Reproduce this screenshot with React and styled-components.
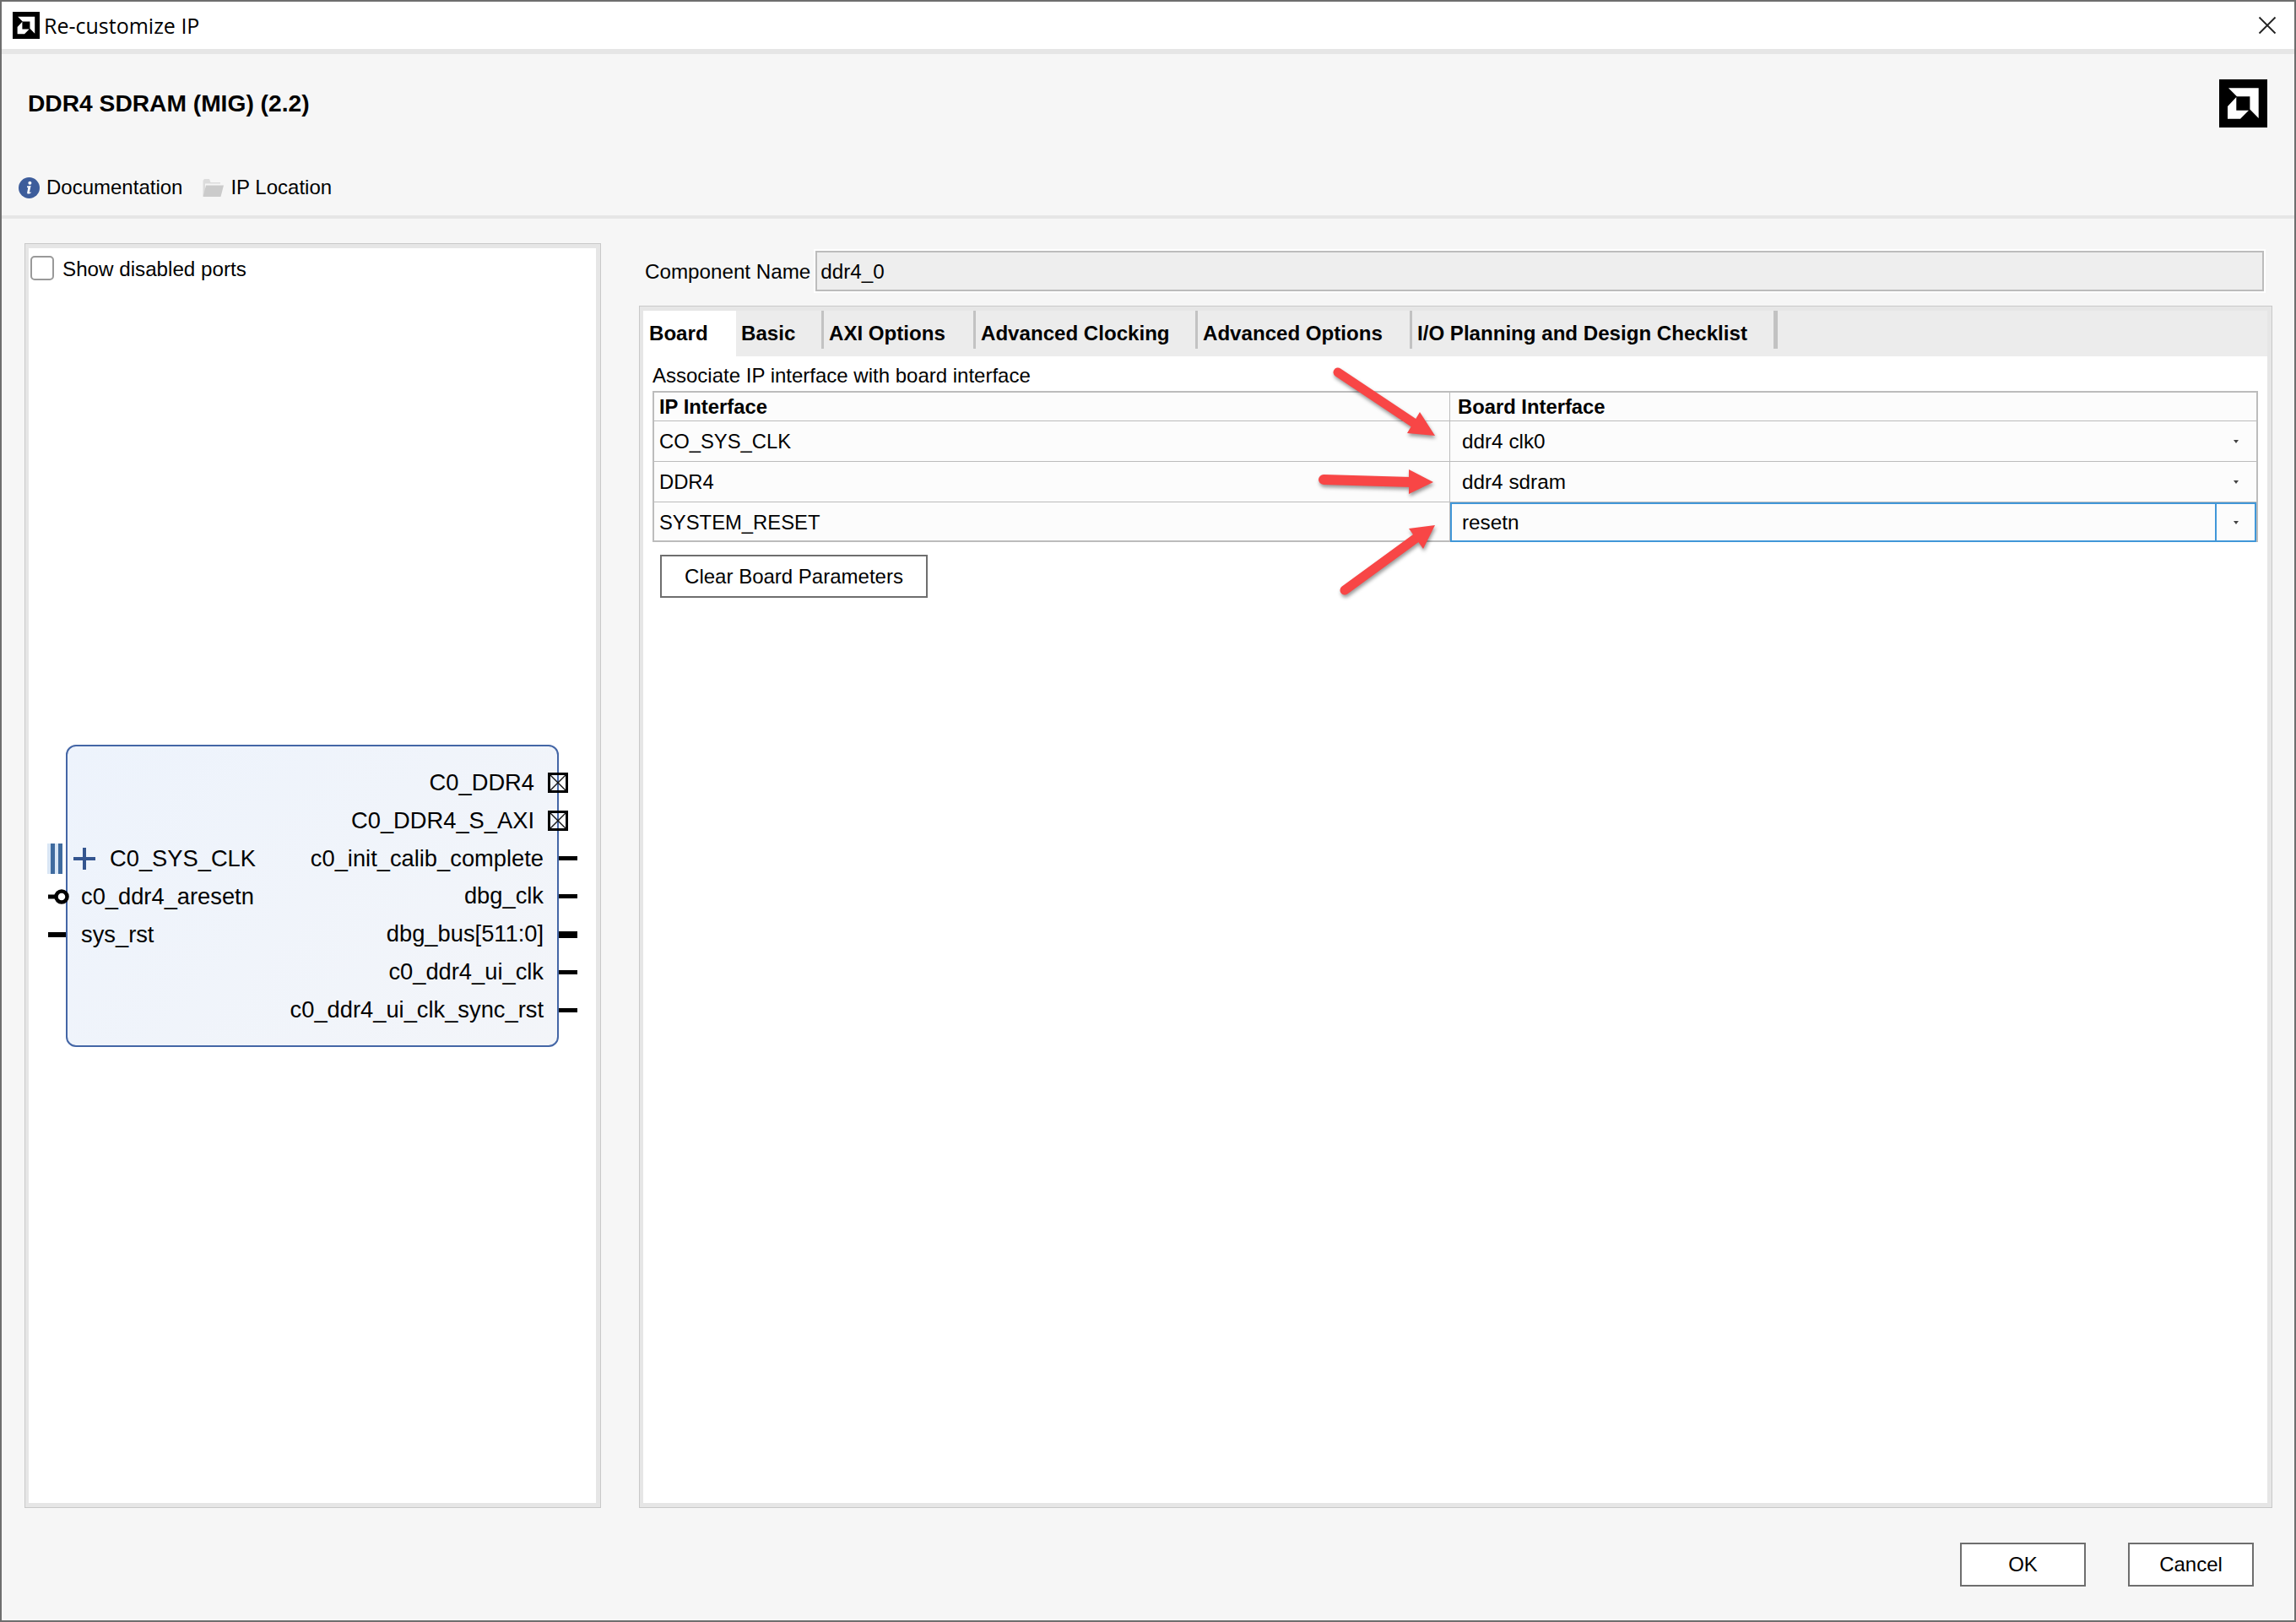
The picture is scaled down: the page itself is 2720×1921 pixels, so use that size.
import React from 'react';
import styled, { createGlobalStyle } from 'styled-components';

const Global = createGlobalStyle`
  * { box-sizing: border-box; }
  html, body { margin: 0; padding: 0; background: #fff; }
  body { font-family: "Liberation Sans", Arial, sans-serif; color: #000; }
`;

const Window = styled.div`
  position: relative;
  width: 2720px;
  height: 1921px;
  border: 2px solid #6e6e6e;
  background: #f6f6f6;
  display: flex;
  flex-direction: column;
  font-size: 24.2px;
`;
const TitleBar = styled.div`
  height: 62px;
  flex: none;
  background: #fff;
  border-bottom: 6px solid #e6e6e6;
  display: flex;
  align-items: center;
  padding: 0 21px 0 13px;
`;
const TitleText = styled.span`
  margin-left: 5px;
  font-family: "Open Sans", sans-serif;
  font-size: 25px;
  flex: 1;
`;
const Header = styled.div`
  height: 195px;
  flex: none;
  border-bottom: 4px solid #e6e6e6;
  display: flex;
  flex-direction: column;
`;
const HeadingRow = styled.div`
  height: 116px;
  padding: 0 32px 0 31px;
  display: flex;
  align-items: center;
  justify-content: space-between;
`;
const Heading = styled.h1`
  margin: 0;
  font-size: 28.2px;
  font-weight: bold;
`;
const LinkRow = styled.div`
  display: flex;
  align-items: center;
  height: 36px;
  margin-top: 24px;
  padding-left: 20px;
  font-size: 24px;
`;
const Link = styled.div`
  display: flex;
  align-items: center;
  gap: 8px;
  margin-right: 24px;
`;
const Body = styled.div`
  flex: 1;
  display: flex;
  gap: 45px;
  padding: 29px 26px 0 27px;
  min-height: 0;
`;
const Frame = styled.div`
  border: 1px solid #c9c9c9;
  background: #e6e6e6;
  padding: 5px 5px 5px 4px;
  display: flex;
  flex-direction: column;
`;
const LeftFrame = styled(Frame)`
  width: 683px;
  flex: none;
`;
const LeftInner = styled.div`
  flex: 1;
  background: #fff;
  padding: 9px 0 0 2px;
`;
const CheckRow = styled.label`
  display: flex;
  align-items: center;
  gap: 10px;
  height: 29px;
`;
const CheckBox = styled.span`
  width: 28px;
  height: 29px;
  background: #fff;
  border: 2.5px solid #999;
  border-radius: 5px;
`;
const LabelText = styled.span`
  padding-top: 2px;
`;
const Block = styled.div`
  width: 584px;
  height: 358px;
  margin: 550px 0 0 42px;
  border: 2px solid #4466a6;
  border-radius: 12px;
  background: linear-gradient(135deg, #edf3fc, #f3f5f9);
  padding-top: 21px;
  display: flex;
  justify-content: space-between;
  font-size: 27.3px;
`;
const PortColumn = styled.div`
  display: flex;
  flex-direction: column;
  flex: 1;
  padding-top: ${p => p.$offset || 0}px;
`;
const PortRow = styled.div`
  position: relative;
  height: 44.8px;
  line-height: 44.8px;
  white-space: nowrap;
  display: flex;
  justify-content: ${p => (p.$right ? 'flex-end' : 'flex-start')};
  padding: ${p => (p.$right ? `0 ${p.$inset}px 0 0` : `0 0 0 ${p.$inset}px`)};
`;
const Stub = styled.span`
  position: absolute;
  top: 50%;
  height: ${p => p.$thick}px;
  margin-top: ${p => -p.$thick / 2}px;
  width: ${p => (p.$right ? 22 : 21)}px;
  background: #000;
  ${p => (p.$right ? 'right: -24px;' : 'left: -23px;')}
`;
const CrossBox = styled.svg`
  position: absolute;
  top: 50%;
  margin-top: -12px;
  right: -13px;
`;
const PinIcon = styled.svg`
  position: absolute;
  left: ${p => p.$left}px;
  top: 50%;
  margin-top: ${p => -p.height / 2}px;
`;
const RightColumn = styled.div`
  flex: 1;
  min-width: 0;
  display: flex;
  flex-direction: column;
`;
const NameRow = styled.div`
  height: 52px;
  margin: 7px 8px 15px 7px;
  display: flex;
  align-items: center;
  gap: 4px;
  flex: none;
`;
const NameInput = styled.div`
  flex: 1;
  height: 52px;
  border: 2px solid #fff;
  display: flex;
`;
const NameField = styled.div`
  flex: 1;
  border: 2px solid #bcbcbc;
  background: #eee;
  padding: 2px 0 0 4px;
  display: flex;
  align-items: center;
`;
const TabFrame = styled(Frame)`
  flex: 1;
`;
const TabInner = styled.div`
  flex: 1;
  background: #fff;
  display: flex;
  flex-direction: column;
`;
const TabBar = styled.div`
  height: 54px;
  flex: none;
  display: flex;
  background: #ececec;
`;
const Tab = styled.div`
  position: relative;
  height: 54px;
  width: ${p => p.$width}px;
  line-height: 54px;
  font-weight: bold;
  font-size: 24.1px;
  white-space: nowrap;
  padding-left: ${p => (p.$active ? 7 : 6)}px;
  background: ${p => (p.$active ? '#fff' : 'transparent')};
  ${p => !p.$active && `
    &::after {
      content: "";
      position: absolute;
      top: 0;
      right: 0;
      height: 45px;
      width: ${p.$lastTab ? 5 : 3}px;
      background: #c2c2c2;
    }
  `}
`;
const TabBody = styled.div`
  padding: 10px 11px 0;
  flex: 1;
`;
const Caption = styled.div`
  height: 26px;
  line-height: 26px;
  font-size: 24px;
  margin-bottom: 5px;
`;
const Table = styled.div`
  width: 1902px;
  height: 179px;
  border: 2px solid #bcbcbc;
  background: #fcfcfc;
  display: flex;
  flex-direction: column;
  font-size: 23.8px;
`;
const Row = styled.div`
  display: grid;
  grid-template-columns: 943px 1fr;
  height: ${p => p.$height}px;
  flex: none;
  ${p => (p.$last ? '' : 'border-bottom: 1px solid #bcbcbc;')}
`;
const Cell = styled.div`
  display: flex;
  align-items: center;
  padding-left: ${p => p.$pad}px;
  font-weight: ${p => (p.$bold ? 'bold' : 'normal')};
  ${p => (p.$divider ? 'border-right: 1px solid #bcbcbc;' : '')}
`;
const ValueCell = styled.div`
  display: flex;
  align-items: stretch;
  font-size: 24.3px;
  ${p => (p.$focused ? 'border: 2px solid #4197d8;' : 'border: 2px solid transparent;')}
`;
const ValueText = styled.div`
  flex: 1;
  display: flex;
  align-items: center;
  padding-left: 12px;
`;
const CaretBox = styled.div`
  width: 47px;
  flex: none;
  display: flex;
  align-items: center;
  justify-content: center;
  ${p => (p.$focused ? 'border-left: 2px solid #4197d8;' : 'border-left: 2px solid transparent;')}
`;
const Caret = styled.span`
  width: 0;
  height: 0;
  border-left: 3.5px solid transparent;
  border-right: 3.5px solid transparent;
  border-top: 4.5px solid #444;
`;
const Button = styled.button`
  font: inherit;
  font-size: 24px;
  color: #000;
  background: #fff;
  border: 2px solid #6e6e6e;
  border-radius: 0;
  padding: 0;
  width: ${p => p.$width}px;
  height: ${p => p.$height}px;
`;
const ClearButton = styled(Button)`
  display: block;
  margin: 15px 0 0 9px;
`;
const Footer = styled.div`
  height: 133px;
  flex: none;
  padding: 41px 48px 0 0;
  display: flex;
  justify-content: flex-end;
  gap: 50px;
`;
const Arrows = styled.svg`
  position: absolute;
  left: -2px;
  top: -2px;
  pointer-events: none;
  filter: drop-shadow(1px 3px 2px rgba(0, 0, 0, 0.4));
`;

const AmdLogo = ({ size }) => (
  <svg width={size} height={size} viewBox="0 0 57 57">
    <rect width="57" height="57" fill="#000" />
    <path d="M11 10.3H46.7V46L36.4 35.4V20.3H21Z" fill="#fff" />
    <path d="M20.3 21L10 32V46.7H25L35 36.7H20.3Z" fill="#fff" />
  </svg>
);

const CloseIcon = () => (
  <svg width="22" height="22" viewBox="0 0 22 22">
    <path d="M1.5 1.5L20.5 20.5M20.5 1.5L1.5 20.5" stroke="#222" strokeWidth="1.8" fill="none" />
  </svg>
);

const InfoIcon = () => (
  <svg width="25" height="25" viewBox="0 0 25 25">
    <circle cx="12.5" cy="12.5" r="12.5" fill="#3d5d9b" />
    <circle cx="13.4" cy="6.8" r="2" fill="#fff" />
    <path d="M10 10.6L14.6 10L12.9 17.4C12.8 18 13.2 18.2 14.5 17.2L14.9 17.9C13.2 19.7 9.8 20.4 10.2 18L11.3 12.3L10 12Z" fill="#fff" />
  </svg>
);

const FolderIcon = () => (
  <svg width="25" height="23" viewBox="0 0 25 23">
    <path d="M0.5 3V21H3V6.5H21V5H9.5L8 1H2Z" fill="#dcdcdc" />
    <path d="M4 8.5H25L21.5 22H0.5Z" fill="#cbcbcb" />
  </svg>
);

const Cross = () => (
  <CrossBox width="24" height="24" viewBox="0 0 24 24">
    <rect x="1.5" y="1.5" width="21" height="21" fill="none" stroke="#000" strokeWidth="3" />
    <path d="M2 2L22 22M22 2L2 22" stroke="#111" strokeWidth="1.4" />
  </CrossBox>
);

const rightPorts = [
  { name: 'C0_DDR4', cross: true },
  { name: 'C0_DDR4_S_AXI', cross: true },
  { name: 'c0_init_calib_complete', thick: 5 },
  { name: 'dbg_clk', thick: 5 },
  { name: 'dbg_bus[511:0]', thick: 8 },
  { name: 'c0_ddr4_ui_clk', thick: 5 },
  { name: 'c0_ddr4_ui_clk_sync_rst', thick: 5 },
];

const tabs = [
  { label: 'Basic', width: 104 },
  { label: 'AXI Options', width: 180 },
  { label: 'Advanced Clocking', width: 263 },
  { label: 'Advanced Options', width: 254 },
  { label: 'I/O Planning and Design Checklist', width: 433 },
];

const boardRows = [
  { ip: 'CO_SYS_CLK', board: 'ddr4 clk0' },
  { ip: 'DDR4', board: 'ddr4 sdram' },
  { ip: 'SYSTEM_RESET', board: 'resetn', focused: true },
];

const App = () => (
  <>
    <Global />
    <Window>
      <TitleBar>
        <AmdLogo size={32} />
        <TitleText>Re-customize IP</TitleText>
        <CloseIcon />
      </TitleBar>
      <Header>
        <HeadingRow>
          <Heading>DDR4 SDRAM (MIG) (2.2)</Heading>
          <AmdLogo size={57} />
        </HeadingRow>
        <LinkRow>
          <Link><InfoIcon />Documentation</Link>
          <Link><FolderIcon />IP Location</Link>
        </LinkRow>
      </Header>
      <Body>
        <LeftFrame>
          <LeftInner>
            <CheckRow><CheckBox /><LabelText>Show disabled ports</LabelText></CheckRow>
            <Block>
              <PortColumn $offset={90}>
                <PortRow $inset={50}>
                  <PinIcon $left={-24} width="18" height="36" viewBox="0 0 18 36">
                    <rect width="18" height="36" fill="#d9e6f5" />
                    <rect x="4" width="5" height="36" fill="#3f6b9f" />
                    <rect x="13" width="5" height="36" fill="#3f6b9f" />
                  </PinIcon>
                  <PinIcon $left={7} width="26" height="26" viewBox="0 0 26 26">
                    <path d="M0 13H26M13 0V26" stroke="#34558f" strokeWidth="4" />
                  </PinIcon>
                  C0_SYS_CLK
                </PortRow>
                <PortRow $inset={16}>
                  <PinIcon $left={-23} width="25" height="20" viewBox="0 0 25 20">
                    <path d="M0 10H9" stroke="#000" strokeWidth="5" />
                    <circle cx="16" cy="10" r="6.5" fill="#fff" stroke="#000" strokeWidth="4.5" />
                  </PinIcon>
                  c0_ddr4_aresetn
                </PortRow>
                <PortRow $inset={16}>
                  <Stub $thick={6} />
                  sys_rst
                </PortRow>
              </PortColumn>
              <PortColumn>
                {rightPorts.map(port => (
                  <PortRow key={port.name} $right $inset={port.cross ? 27 : 16}>
                    {port.name}
                    {port.cross ? <Cross /> : <Stub $right $thick={port.thick} />}
                  </PortRow>
                ))}
              </PortColumn>
            </Block>
          </LeftInner>
        </LeftFrame>
        <RightColumn>
          <NameRow>
            <LabelText>Component Name</LabelText>
            <NameInput><NameField>ddr4_0</NameField></NameInput>
          </NameRow>
          <TabFrame>
            <TabInner>
              <TabBar>
                <Tab $active $width={110}>Board</Tab>
                {tabs.map((tab, i) => (
                  <Tab key={tab.label} $width={tab.width} $lastTab={i === tabs.length - 1}>{tab.label}</Tab>
                ))}
              </TabBar>
              <TabBody>
                <Caption>Associate IP interface with board interface</Caption>
                <Table>
                  <Row $height={34}>
                    <Cell $bold $divider $pad={6}>IP Interface</Cell>
                    <Cell $bold $pad={9}>Board Interface</Cell>
                  </Row>
                  {boardRows.map((row, i) => (
                    <Row key={row.ip} $height={i === 2 ? 47 : 48} $last={i === 2}>
                      <Cell $divider $pad={6}>{row.ip}</Cell>
                      <ValueCell $focused={row.focused}>
                        <ValueText>{row.board}</ValueText>
                        <CaretBox $focused={row.focused}><Caret /></CaretBox>
                      </ValueCell>
                    </Row>
                  ))}
                </Table>
                <ClearButton $width={317} $height={51}>Clear Board Parameters</ClearButton>
              </TabBody>
            </TabInner>
          </TabFrame>
        </RightColumn>
      </Body>
      <Footer>
        <Button $width={149} $height={52}>OK</Button>
        <Button $width={149} $height={52}>Cancel</Button>
      </Footer>
      <Arrows width="2720" height="1921" viewBox="0 0 2720 1921">
        <g fill="#f84646">
          <path d="M1585 441L1675 501" stroke="#f84646" strokeWidth="11" strokeLinecap="round" />
          <path d="M1700 516L1682 488L1667 513Z" />
          <path d="M1568 568L1672 571" stroke="#f84646" strokeWidth="12" strokeLinecap="round" />
          <path d="M1698 571L1669 556V585Z" />
          <path d="M1593 699L1678 637" stroke="#f84646" strokeWidth="11" strokeLinecap="round" />
          <path d="M1700 622L1669 626L1686 650Z" />
        </g>
      </Arrows>
    </Window>
  </>
);

export default App;
